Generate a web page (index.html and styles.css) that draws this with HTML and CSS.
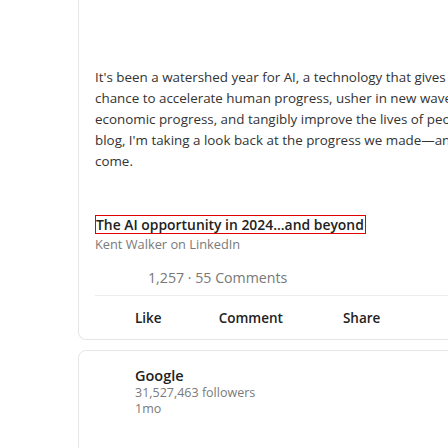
FILE: index.html
```html
<!DOCTYPE html>
<html>
<head>
<meta charset="utf-8">
<link rel="stylesheet" href="styles.css">
</head>
<body>
<div class="page">
  <section class="card post">
    <p class="body-text">It's been a watershed year for AI, a technology that gives us a once-in-a-generation<br>chance to accelerate human progress, usher in new waves of innovation and<br>economic progress, and tangibly improve the lives of people around the world. In this<br>blog, I'm taking a look back at the progress we made—and what's to<br>come.</p>
    <div class="link-preview">
      <div class="link-title">The AI opportunity in 2024...and beyond</div>
      <div class="link-source">Kent Walker on LinkedIn</div>
    </div>
    <div class="stats">1,257 · 55 Comments</div>
    <div class="actions">
      <span class="action">Like</span>
      <span class="action">Comment</span>
      <span class="action">Share</span>
    </div>
  </section>
  <section class="card company">
    <div class="company-name">Google</div>
    <div class="company-meta">31,527,463 followers</div>
    <div class="company-meta">1mo</div>
  </section>
</div>
</body>
</html>
```
FILE: styles.css
```css
html, body {
  margin: 0;
  padding: 0;
  background: #ffffff;
  overflow: hidden;
}
body {
  font-family: "Open Sans", "Noto Sans", sans-serif;
  color: #2b2b2b;
}
.page {
  padding-left: 78px;
  width: 560px;
}
.card {
  border: 1px solid #e6e6e6;
  border-radius: 8px;
  background: #fff;
}
.post {
  border-top: 0;
  border-radius: 0 0 8px 8px;
  padding: 67px 0 13px 16px;
}
.body-text {
  margin: 0;
  font-size: 13.4px;
  line-height: 21px;
  white-space: nowrap;
  color: #333;
}
.link-preview {
  margin-top: 41px;
}
.link-title {
  display: inline-block;
  border: 1px solid #e00000;
  font-size: 13.9px;
  font-weight: 600;
  line-height: 17px;
  color: #222;
  padding: 0 1px 0 0;
}
.link-source {
  font-size: 12.8px;
  line-height: 14px;
  color: #7a7a7a;
  margin-top: 2px;
}
.stats {
  margin-top: 19px;
  padding-left: 53px;
  font-size: 14.2px;
  line-height: 16px;
  color: #777;
  padding-bottom: 9px;
  border-bottom: 1px solid #ececec;
}
.actions {
  display: flex;
  padding-left: 40px;
  margin-top: 14px;
}
.action {
  font-size: 13.5px;
  font-weight: 600;
  line-height: 16px;
  color: #222;
}
.action:nth-child(2) { margin-left: 57px; }
.action:nth-child(3) { margin-left: 60px; }
.company {
  margin-top: 10px;
  padding: 16px 0 40px 56px;
}
.company-name {
  font-size: 14.5px;
  font-weight: 600;
  line-height: 18px;
  color: #222;
}
.company-meta {
  font-size: 12.5px;
  line-height: 16px;
  color: #7a7a7a;
}
```
